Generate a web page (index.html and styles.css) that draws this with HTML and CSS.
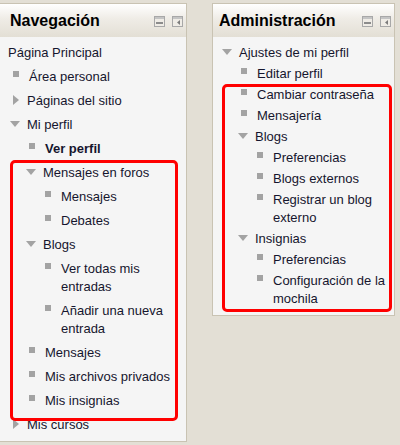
FILE: index.html
```html
<!DOCTYPE html>
<html lang="es">
<head>
<meta charset="utf-8">
<title>Bloques</title>
<link rel="stylesheet" href="styles.css">
</head>
<body>
<div class="page">
  <section class="block block-nav">
    <header class="block-header">
      <h2 class="block-title">Navegación</h2>
      <div class="block-actions">
        <svg class="act" width="11" height="11" viewBox="0 0 11 11"><rect x="0.5" y="0.5" width="10" height="10" fill="#efece6" stroke="#a8a8a8"/><rect x="1" y="1" width="9" height="2" fill="#c4c4c4"/><rect x="2" y="6" width="7" height="2" fill="#8c8c8c"/></svg>
        <svg class="act" width="11" height="11" viewBox="0 0 11 11"><rect x="0.5" y="0.5" width="10" height="10" fill="#efece6" stroke="#a8a8a8"/><rect x="1" y="1" width="9" height="2" fill="#c4c4c4"/><path d="M5 6.5 L8 4 L8 9 Z" fill="#7c7c7c"/></svg>
      </div>
    </header>
    <div class="block-body nav-body">
      <ul class="tree">
        <li><div class="row"><span class="txt">Página Principal</span></div>
          <ul class="root-children">
            <li><div class="row"><span class="ic sq"></span><span class="txt">Área personal</span></div></li>
            <li><div class="row"><span class="ic tri-r"></span><span class="txt">Páginas del sitio</span></div></li>
            <li><div class="row"><span class="ic tri-d"></span><span class="txt">Mi perfil</span></div>
              <ul>
                <li><div class="row"><span class="ic sq"></span><span class="txt bold">Ver perfil</span></div></li>
                <li><div class="row"><span class="ic tri-d"></span><span class="txt">Mensajes en foros</span></div>
                  <ul>
                    <li><div class="row"><span class="ic sq"></span><span class="txt">Mensajes</span></div></li>
                    <li><div class="row"><span class="ic sq"></span><span class="txt">Debates</span></div></li>
                  </ul>
                </li>
                <li><div class="row"><span class="ic tri-d"></span><span class="txt">Blogs</span></div>
                  <ul>
                    <li><div class="row"><span class="ic sq"></span><span class="txt">Ver todas mis entradas</span></div></li>
                    <li><div class="row"><span class="ic sq"></span><span class="txt">Añadir una nueva entrada</span></div></li>
                  </ul>
                </li>
                <li><div class="row"><span class="ic sq"></span><span class="txt">Mensajes</span></div></li>
                <li><div class="row"><span class="ic sq"></span><span class="txt">Mis archivos privados</span></div></li>
                <li><div class="row"><span class="ic sq"></span><span class="txt">Mis insignias</span></div></li>
              </ul>
            </li>
            <li><div class="row"><span class="ic tri-r"></span><span class="txt">Mis cursos</span></div></li>
          </ul>
        </li>
      </ul>
    </div>
  </section>

  <section class="block block-admin">
    <header class="block-header">
      <h2 class="block-title">Administración</h2>
      <div class="block-actions">
        <svg class="act" width="11" height="11" viewBox="0 0 11 11"><rect x="0.5" y="0.5" width="10" height="10" fill="#efece6" stroke="#a8a8a8"/><rect x="1" y="1" width="9" height="2" fill="#c4c4c4"/><rect x="2" y="6" width="7" height="2" fill="#8c8c8c"/></svg>
        <svg class="act" width="11" height="11" viewBox="0 0 11 11"><rect x="0.5" y="0.5" width="10" height="10" fill="#efece6" stroke="#a8a8a8"/><rect x="1" y="1" width="9" height="2" fill="#c4c4c4"/><path d="M5 6.5 L8 4 L8 9 Z" fill="#7c7c7c"/></svg>
      </div>
    </header>
    <div class="block-body admin-body">
      <ul class="tree">
        <li><div class="row"><span class="ic tri-d"></span><span class="txt">Ajustes de mi perfil</span></div>
          <ul>
            <li><div class="row"><span class="ic sq"></span><span class="txt">Editar perfil</span></div></li>
            <li><div class="row"><span class="ic sq"></span><span class="txt">Cambiar contraseña</span></div></li>
            <li><div class="row"><span class="ic sq"></span><span class="txt">Mensajería</span></div></li>
            <li><div class="row"><span class="ic tri-d"></span><span class="txt">Blogs</span></div>
              <ul>
                <li><div class="row"><span class="ic sq"></span><span class="txt">Preferencias</span></div></li>
                <li><div class="row"><span class="ic sq"></span><span class="txt">Blogs externos</span></div></li>
                <li><div class="row"><span class="ic sq"></span><span class="txt">Registrar un blog externo</span></div></li>
              </ul>
            </li>
            <li><div class="row"><span class="ic tri-d"></span><span class="txt">Insignias</span></div>
              <ul>
                <li><div class="row"><span class="ic sq"></span><span class="txt">Preferencias</span></div></li>
                <li><div class="row"><span class="ic sq"></span><span class="txt">Configuración de la mochila</span></div></li>
              </ul>
            </li>
          </ul>
        </li>
      </ul>
    </div>
  </section>
</div>
<div class="mark mark-nav"></div>
<div class="mark mark-admin"></div>
</body>
</html>
```
FILE: styles.css
```css
html, body {
  margin: 0;
  padding: 0;
}
body {
  background: #e3dfd5;
  font-family: "Liberation Sans", Arial, sans-serif;
  font-size: 13px;
  color: #15152e;
  width: 400px;
  height: 445px;
  overflow: hidden;
  position: relative;
}
.page {
  display: flex;
  align-items: flex-start;
  gap: 25px;
  padding-top: 3px;
}
.block {
  background: #f5f5f5;
  border: 1px solid #c9c3b3;
  box-sizing: border-box;
}
.block-nav {
  margin-left: -1px;
  width: 188px;
}
.block-admin {
  width: 183px;
}
.block-header {
  height: 33px;
  display: flex;
  align-items: center;
  justify-content: space-between;
  background: linear-gradient(to bottom, #ffffff 0%, #efece6 45%, #e3dfd5 100%);
  padding: 0 3px 0 6px;
}
.block-nav .block-header {
  padding-left: 10px;
}
.block-title {
  margin: 0;
  font-size: 16px;
  font-weight: bold;
  color: #000;
  line-height: 20px;
  padding-top: 1px;
}
.block-actions {
  display: flex;
  gap: 7px;
  align-items: center;
  padding-top: 1px;
}
.act {
  display: block;
}
.block-body {
  padding-left: 8px;
  padding-right: 4px;
}
.nav-body {
  padding-top: 4px;
  padding-bottom: 4px;
}
.admin-body {
  padding-top: 6px;
  padding-bottom: 5px;
}
.tree, .tree ul {
  list-style: none;
  margin: 0;
  padding: 0;
}
.tree ul {
  padding-left: 16px;
}
.tree ul.root-children {
  padding-left: 1px;
}
.row {
  display: flex;
  align-items: flex-start;
  line-height: 18px;
}
.nav-body .row {
  padding: 3px 0;
}
.admin-body .row {
  padding: 1px 0 2px;
}
.txt.bold {
  font-weight: bold;
}
.ic {
  flex: none;
  width: 18px;
  height: 18px;
  position: relative;
}
.ic.sq {
  width: 20px;
}
.ic.sq::before {
  content: "";
  position: absolute;
  left: 4px;
  top: 3px;
  width: 6px;
  height: 6px;
  background: #a3a3a3;
}
.ic.tri-d::before {
  content: "";
  position: absolute;
  left: 1px;
  top: 5px;
  border-left: 5.5px solid transparent;
  border-right: 5.5px solid transparent;
  border-top: 6px solid #a3a3a3;
}
.ic.tri-r::before {
  content: "";
  position: absolute;
  left: 4px;
  top: 3px;
  border-top: 5px solid transparent;
  border-bottom: 5px solid transparent;
  border-left: 6px solid #a3a3a3;
}
.mark {
  position: absolute;
  border: 3px solid #ff0000;
  border-radius: 5px;
  box-sizing: border-box;
}
.mark-nav {
  left: 10px;
  top: 160px;
  width: 168px;
  height: 261px;
}
.mark-admin {
  left: 222px;
  top: 84px;
  width: 170px;
  height: 228px;
}
```
